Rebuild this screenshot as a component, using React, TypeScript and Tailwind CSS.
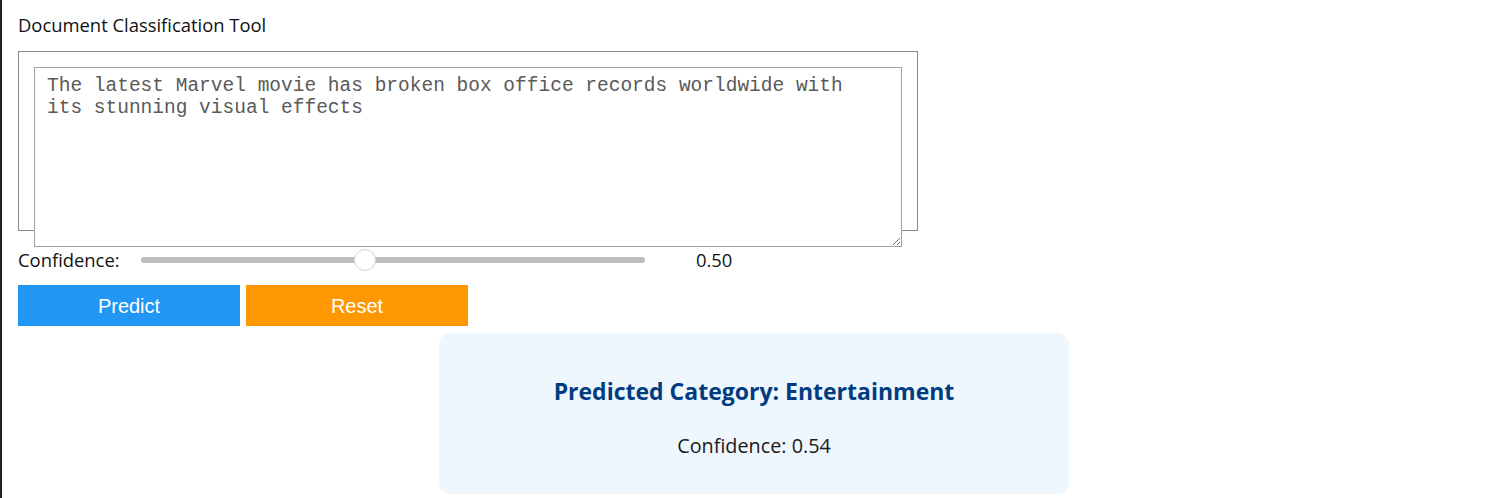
import React from 'react';

const sans = "font-['Open_Sans',sans-serif]";

export default function App() {
    return (
        <div className="min-h-[498px] w-full bg-white border-l-2 border-[#1f2328] pt-[13px] pl-4 pr-4">
            <h1 className={`${sans} text-[18.4px] text-[#111] leading-6`}>Document Classification Tool</h1>

            <div className="mt-[14px] w-[900px] h-[180px] border border-[#8a8a8a] p-[15px]">
                <textarea
                    className="block w-[868px] h-[180px] border border-[#a0a0a0] bg-white px-3 pt-[7px] font-['Liberation_Mono',monospace] text-[19.5px] leading-[22px] text-[#5a5a5a] resize-y outline-none"
                    defaultValue="The latest Marvel movie has broken box office records worldwide with its stunning visual effects"
                />
            </div>

            <div className={`${sans} mt-[17px] flex items-center h-[24px] text-[18.4px] text-[#111]`}>
                <span className="w-[123px]">Confidence:</span>
                <div className="relative w-[504px] h-[6px] rounded-full bg-[#bdbdbd]">
                    <div className="absolute left-[213px] top-[-8px] w-[22px] h-[22px] rounded-full bg-white border border-[#d5d5d5]" />
                </div>
                <span className="ml-[51px]">0.50</span>
            </div>

            <div className="mt-[13px] flex gap-[6px]">
                <button className="w-[222px] h-[41px] bg-[#2196f3] text-white font-['Liberation_Sans',sans-serif] text-[20px]">Predict</button>
                <button className="w-[222px] h-[41px] bg-[#ff9800] text-white font-['Liberation_Sans',sans-serif] text-[20px]">Reset</button>
            </div>

            <div className={`${sans} ml-[421px] mt-[7px] w-[630px] h-[161px] rounded-xl bg-[#eef6fe] flex flex-col items-center pt-[42px]`}>
                <div className="text-[23px] font-bold text-[#003c80] leading-8">Predicted Category: Entertainment</div>
                <div className="mt-[27px] text-[19.8px] text-[#1a1a1a] leading-6">Confidence: 0.54</div>
            </div>
        </div>
    );
}
